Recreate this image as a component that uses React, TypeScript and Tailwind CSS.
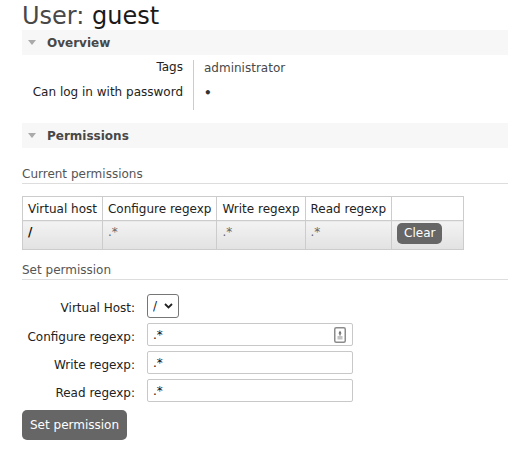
const SectionBar = ({ title }: { title: string }) => (
  <div className="flex h-[25px] items-center bg-[#f7f7f7] pl-[6px]">
    <svg width="8" height="5" viewBox="0 0 8 5" className="mr-[11px]">
      <path d="M0 0h8L4 5z" fill="#aaaaaa" />
    </svg>
    <span className="font-bold text-[#484848]">{title}</span>
  </div>
);

const SubHeading = ({ title, className = "" }: { title: string; className?: string }) => (
  <h3 className={`border-b border-[#dddddd] pb-[2px] text-[#555555] ${className}`}>{title}</h3>
);

const AutofillIcon = () => (
  <svg width="12" height="16" viewBox="0 0 12 16">
    <rect x="0.75" y="0.75" width="10.5" height="14.5" rx="1.5" fill="#ffffff" stroke="#8c8c8c" strokeWidth="1.5" />
    <path d="M6 3.5L7.6 6.5H4.4z" fill="#6e6e6e" />
    <rect x="5.3" y="6" width="1.4" height="2.5" fill="#6e6e6e" />
    <rect x="3.5" y="9" width="5" height="3.5" fill="#c2c2c2" />
  </svg>
);

const FormRow = ({ label, children }: { label: string; children: React.ReactNode }) => (
  <div className="mb-[5px] flex items-start gap-[12px]">
    <label className="w-[113px] pt-[7px] text-right leading-[15px] text-[#222222]">{label}</label>
    {children}
  </div>
);

const App = () => {
  const headers = ["Virtual host", "Configure regexp", "Write regexp", "Read regexp"];
  const perms = [".*", ".*", ".*"];

  return (
    <div className="min-h-screen bg-white pl-[22px] font-['DejaVu_Sans',sans-serif] text-[12px] leading-[14px] text-[#484848]">
      <h1 className="pt-[2px] text-[24px] leading-[28px] text-[#484848]">
        User: <span className="text-[#1a1a1a]">guest</span>
      </h1>

      <SectionBar title="Overview" />
      <div className="mt-[5px] flex">
        <div className="w-[171px] pr-[10px] text-right text-[#222222]">
          <div className="h-[25px]">Tags</div>
          <div className="h-[25px]">Can log in with password</div>
        </div>
        <div className="border-l border-[#cccccc] pl-[10px]">
          <div className="h-[25px] pt-[1px]">administrator</div>
          <div className="h-[25px] pt-[1px] font-bold text-[#333333]">•</div>
        </div>
      </div>

      <div className="mt-[13px]">
        <SectionBar title="Permissions" />
      </div>

      <SubHeading title="Current permissions" className="mt-[19px]" />

      <table className="mt-[12px] border-collapse">
        <thead>
          <tr>
            {headers.map((h) => (
              <th
                key={h}
                className="whitespace-nowrap border border-[#cccccc] bg-white px-[5px] pb-[4px] pt-[5px] text-left font-normal text-[#222222]"
              >
                {h}
              </th>
            ))}
            <th className="w-[72px] border border-[#cccccc] bg-white" />
          </tr>
        </thead>
        <tbody>
          <tr>
            <td className="border border-[#cccccc] bg-linear-to-b from-[#f3f3f3] to-[#e2e2e2] px-[5px] pt-[4px] align-top font-bold text-[#111111]">
              /
            </td>
            {perms.map((p, i) => (
              <td
                key={i}
                className="border border-[#cccccc] bg-linear-to-b from-[#f3f3f3] to-[#e2e2e2] px-[5px] pt-[4px] align-top text-[#666666]"
              >
                {p}
              </td>
            ))}
            <td className="border border-[#cccccc] bg-linear-to-b from-[#f3f3f3] to-[#e2e2e2] px-[5px] pb-[5px] pt-[2px] align-top">
              <button className="rounded-[5px] bg-[#666666] px-[7px] py-[3px] leading-[15px] text-white">
                Clear
              </button>
            </td>
          </tr>
        </tbody>
      </table>

      <SubHeading title="Set permission" className="mt-[13px]" />

      <form className="mt-[14px]" onSubmit={(e) => e.preventDefault()}>
        <FormRow label="Virtual Host:">
          <div className="relative">
            <select className="h-[24px] w-[32px] appearance-none rounded-[3px] border border-[#767676] bg-white pl-[5px] text-[#222222]">
              <option>/</option>
            </select>
            <svg
              width="9"
              height="6"
              viewBox="0 0 9 6"
              className="pointer-events-none absolute right-[6px] top-[9px]"
            >
              <path d="M1 1l3.5 3.5L8 1" fill="none" stroke="#222222" strokeWidth="1.8" />
            </svg>
          </div>
        </FormRow>
        <FormRow label="Configure regexp:">
          <div className="relative">
            <input
              defaultValue=".*"
              className="h-[23px] w-[206px] rounded-[2px] border border-[#c8c8c8] px-[5px] text-[#111111] outline-none"
            />
            <div className="pointer-events-none absolute right-[7px] top-[4px]">
              <AutofillIcon />
            </div>
          </div>
        </FormRow>
        <FormRow label="Write regexp:">
          <input
            defaultValue=".*"
            className="h-[23px] w-[206px] rounded-[2px] border border-[#c8c8c8] px-[5px] text-[#111111] outline-none"
          />
        </FormRow>
        <FormRow label="Read regexp:">
          <input
            defaultValue=".*"
            className="h-[23px] w-[206px] rounded-[2px] border border-[#c8c8c8] px-[5px] text-[#111111] outline-none"
          />
        </FormRow>
        <button
          type="submit"
          className="mt-[3px] rounded-[5px] bg-[#666666] px-[8px] py-[8px] leading-[14px] text-white"
        >
          Set permission
        </button>
      </form>
    </div>
  );
};

export default App;
